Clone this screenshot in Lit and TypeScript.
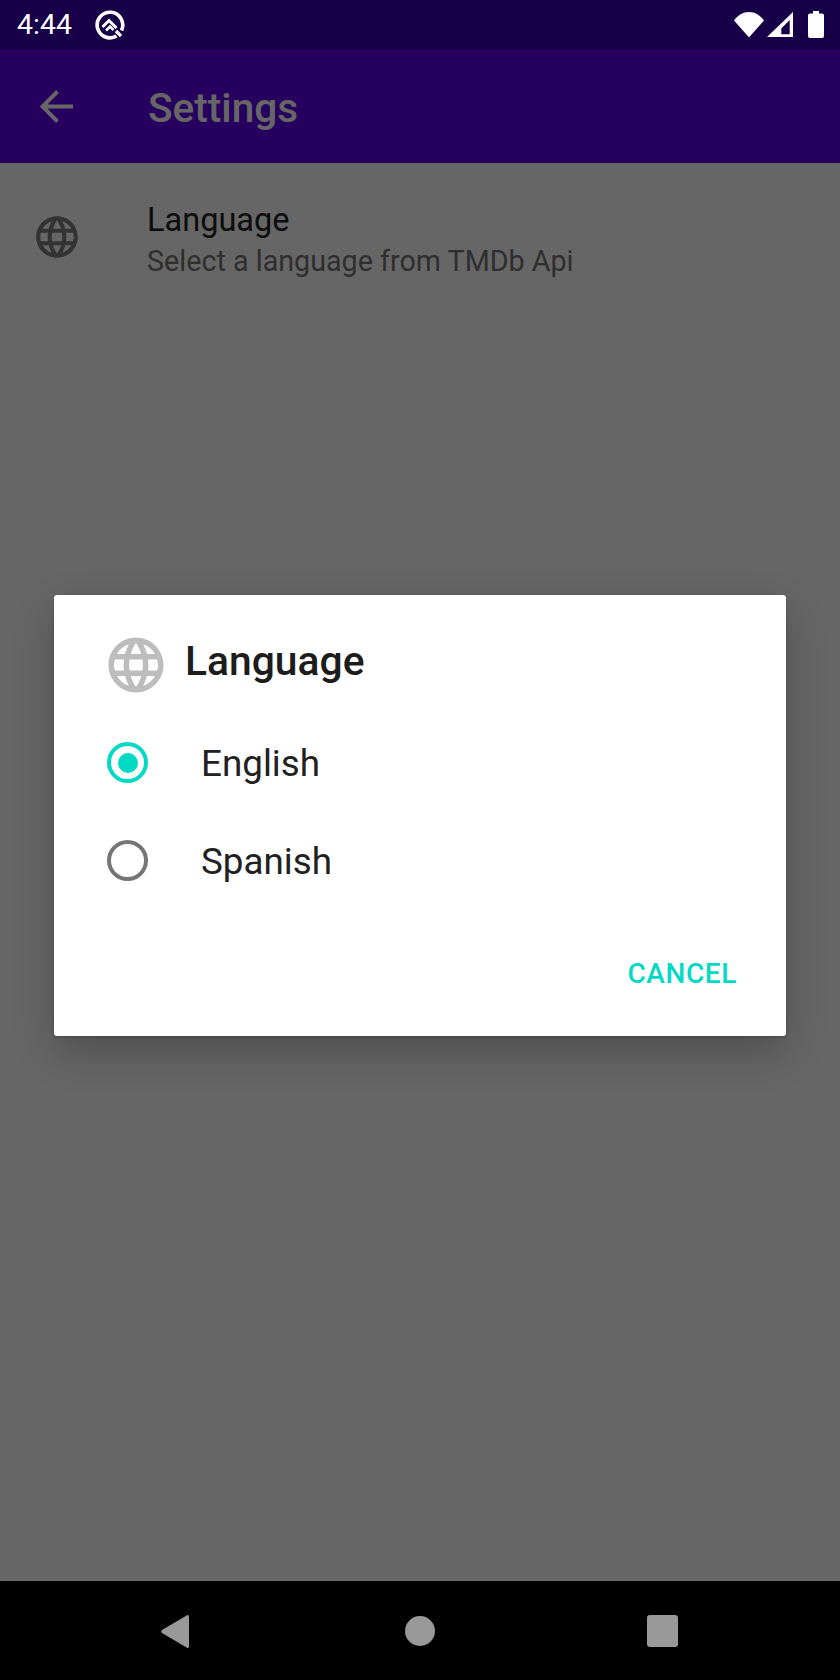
import { LitElement, html, css, svg } from "lit";
import { customElement } from "lit/decorators.js";

const GLOBE = svg`<path d="M11.99 2C6.47 2 2 6.48 2 12s4.47 10 9.99 10C17.52 22 22 17.52 22 12S17.52 2 11.99 2zm6.93 6h-2.95c-.32-1.25-.78-2.45-1.38-3.56 1.84.63 3.37 1.91 4.33 3.56zM12 4.04c.83 1.2 1.48 2.53 1.91 3.96h-3.82c.43-1.43 1.08-2.76 1.91-3.96zM4.26 14C4.1 13.36 4 12.69 4 12s.1-1.36.26-2h3.38c-.08.66-.14 1.32-.14 2 0 .68.06 1.34.14 2H4.26zm.82 2h2.95c.32 1.25.78 2.45 1.38 3.56-1.84-.63-3.37-1.9-4.33-3.56zm2.95-8H5.08c.96-1.66 2.49-2.93 4.33-3.56C8.81 5.55 8.35 6.75 8.03 8zM12 19.96c-.83-1.2-1.48-2.53-1.91-3.96h3.82c-.43 1.43-1.08 2.76-1.91 3.96zM14.34 14H9.66c-.09-.66-.16-1.32-.16-2 0-.68.07-1.35.16-2h4.68c.09.65.16 1.32.16 2 0 .68-.07 1.34-.16 2zm.25 5.56c.6-1.11 1.06-2.31 1.38-3.56h2.95c-.96 1.65-2.49 2.93-4.33 3.56zM16.36 14c.08-.66.14-1.32.14-2 0-.68-.06-1.34-.14-2h3.38c.16.64.26 1.31.26 2s-.1 1.36-.26 2h-3.38z"/>`;

@customElement("app-root")
export class AppRoot extends LitElement {
  static styles = css`
    :host {
      display: flex;
      flex-direction: column;
      width: 840px;
      height: 1680px;
      font-family: Roboto, "Liberation Sans", sans-serif;
      overflow: hidden;
      background: #fff;
    }
    .status {
      flex: 0 0 49px;
      height: 49px;
      background: #170048;
      color: #fff;
      display: flex;
      align-items: center;
      box-sizing: border-box;
      padding: 0 16px 0 17px;
    }
    .time {
      font-size: 28.5px;
      line-height: 49px;
      width: 78px;
    }
    .qlogo {
      width: 30px;
      height: 30px;
      display: block;
    }
    .status-right {
      margin-left: auto;
      display: flex;
      align-items: center;
      gap: 3px;
    }
    .status-right svg {
      display: block;
    }
    .battery {
      margin-left: 12px;
    }
    .main {
      flex: 1;
      position: relative;
      display: flex;
      flex-direction: column;
    }
    .appbar {
      flex: 0 0 114px;
      background: #6200ee;
      color: #fff;
      display: flex;
      align-items: center;
      padding-left: 40px;
    }
    .back {
      width: 33px;
      height: 33px;
      display: block;
      margin-right: 75px;
    }
    .appbar-title {
      font-size: 40.6px;
      font-weight: 500;
      line-height: 48px;
      padding-top: 3px;
    }
    .row {
      display: flex;
      align-items: flex-start;
      padding: 37px 0 0 32px;
    }
    .row-icon {
      width: 50px;
      height: 50px;
      fill: #808080;
      display: block;
      margin: 12px 65px 0 0;
    }
    .row-title {
      font-size: 32.5px;
      line-height: 41px;
      color: #212121;
    }
    .row-sub {
      font-size: 28.7px;
      line-height: 41px;
      color: #757575;
    }
    .scrim {
      position: absolute;
      inset: 0;
      background: rgba(0, 0, 0, 0.6);
      display: flex;
      align-items: center;
      justify-content: center;
    }
    .dialog {
      width: 732px;
      height: 441px;
      box-sizing: border-box;
      background: #fff;
      border-radius: 3px;
      box-shadow: 0 16px 40px rgba(0, 0, 0, 0.22), 0 1px 3px rgba(0, 0, 0, 0.2);
      display: flex;
      flex-direction: column;
      padding: 39px 49px 0 53px;
    }
    .dialog-head {
      display: flex;
      align-items: center;
      height: 62px;
    }
    .dialog-icon {
      width: 66px;
      height: 66px;
      fill: #bdbdbd;
      display: block;
      margin: 0 16px 0 -4px;
      flex: none;
    }
    .dialog-title {
      font-size: 40.8px;
      font-weight: 500;
      color: #1c1c1c;
      line-height: 48px;
      padding-bottom: 8px;
    }
    .options {
      margin-top: 27px;
      display: flex;
      flex-direction: column;
      gap: 16px;
    }
    .option {
      display: flex;
      align-items: center;
      height: 82px;
      gap: 53px;
      font-size: 36.8px;
      color: #212121;
    }
    .radio {
      width: 41px;
      height: 41px;
      box-sizing: border-box;
      border-radius: 50%;
      border: 4.5px solid #757575;
      flex: none;
      display: flex;
      align-items: center;
      justify-content: center;
      margin-bottom: 2px;
    }
    .radio.on {
      border-color: #03dac5;
    }
    .radio.on::after {
      content: "";
      width: 20px;
      height: 20px;
      border-radius: 50%;
      background: #03dac5;
    }
    .actions {
      margin-top: auto;
      display: flex;
      justify-content: flex-end;
      padding-bottom: 44px;
    }
    .cancel {
      font-size: 28px;
      font-weight: 500;
      line-height: 36px;
      color: #03dac5;
      letter-spacing: 0.6px;
    }
    .nav {
      flex: 0 0 98px;
      background: #000;
      display: flex;
      align-items: center;
      padding-left: 161px;
      padding-top: 1px;
    }
    .nav svg {
      display: block;
      fill: #999;
    }
    .nav .home {
      margin: 0 212px 0 216px;
    }
  `;

  render() {
    return html`
      <div class="status">
        <span class="time">4:44</span>
        <svg class="qlogo" viewBox="0 0 30 30" fill="none" stroke="#fff">
          <path d="M21.500 26A12.800 12.800 0 1 1 26.500 20.500" stroke-width="3.600" />
          <path d="M7.500 17 14 10.500 21.500 18" stroke-width="3" />
          <path d="M11 20.500 15 16.500 18.500 20" stroke-width="2.600" />
          <path d="M21 21 26 26" stroke-width="3.200" />
        </svg>
        <div class="status-right">
          <svg width="30" height="25" viewBox="0 0 30 25" fill="#fff">
            <path d="M0 8.500C3.800 3.200 9 0 15 0s11.200 3.200 15 8.500L15.800 24.600a1 1 0 0 1-1.600 0z" />
          </svg>
          <svg width="26" height="25" viewBox="0 0 26 25">
            <path fill="#fff" fill-rule="evenodd" d="M26 0V25H0zM14.300 16.400V22.300H22.700V8z" />
          </svg>
          <svg class="battery" width="16" height="27" viewBox="0 0 16 27" fill="#fff">
            <path d="M5 0h6v2.500h3a2 2 0 0 1 2 2V25a2 2 0 0 1-2 2H2a2 2 0 0 1-2-2V4.500a2 2 0 0 1 2-2h3z" />
          </svg>
        </div>
      </div>

      <div class="main">
        <div class="appbar">
          <svg class="back" viewBox="0 0 33 33" fill="none" stroke="#fff" stroke-width="4">
            <path d="M33 16.500H3M17.500 1.500 2.500 16.500 17.500 31.500" />
          </svg>
          <span class="appbar-title">Settings</span>
        </div>
        <div class="row">
          <svg class="row-icon" viewBox="0 0 24 24">${GLOBE}</svg>
          <div>
            <div class="row-title">Language</div>
            <div class="row-sub">Select a language from TMDb Api</div>
          </div>
        </div>

        <div class="scrim">
          <div class="dialog">
            <div class="dialog-head">
              <svg class="dialog-icon" viewBox="0 0 24 24">${GLOBE}</svg>
              <span class="dialog-title">Language</span>
            </div>
            <div class="options">
              <div class="option"><span class="radio on"></span><span>English</span></div>
              <div class="option"><span class="radio"></span><span>Spanish</span></div>
            </div>
            <div class="actions"><span class="cancel">CANCEL</span></div>
          </div>
        </div>
      </div>

      <div class="nav">
        <svg width="28" height="33" viewBox="0 0 28 33">
          <path d="M26 .3a1.500 1.500 0 0 1 2 1.400v29.600a1.500 1.500 0 0 1-2 1.400L1 18a1.800 1.800 0 0 1 0-3z" />
        </svg>
        <svg class="home" width="30" height="30" viewBox="0 0 30 30"><circle cx="15" cy="15" r="15" /></svg>
        <svg width="31" height="32" viewBox="0 0 31 32"><rect width="31" height="32" rx="3" /></svg>
      </div>
    `;
  }
}
